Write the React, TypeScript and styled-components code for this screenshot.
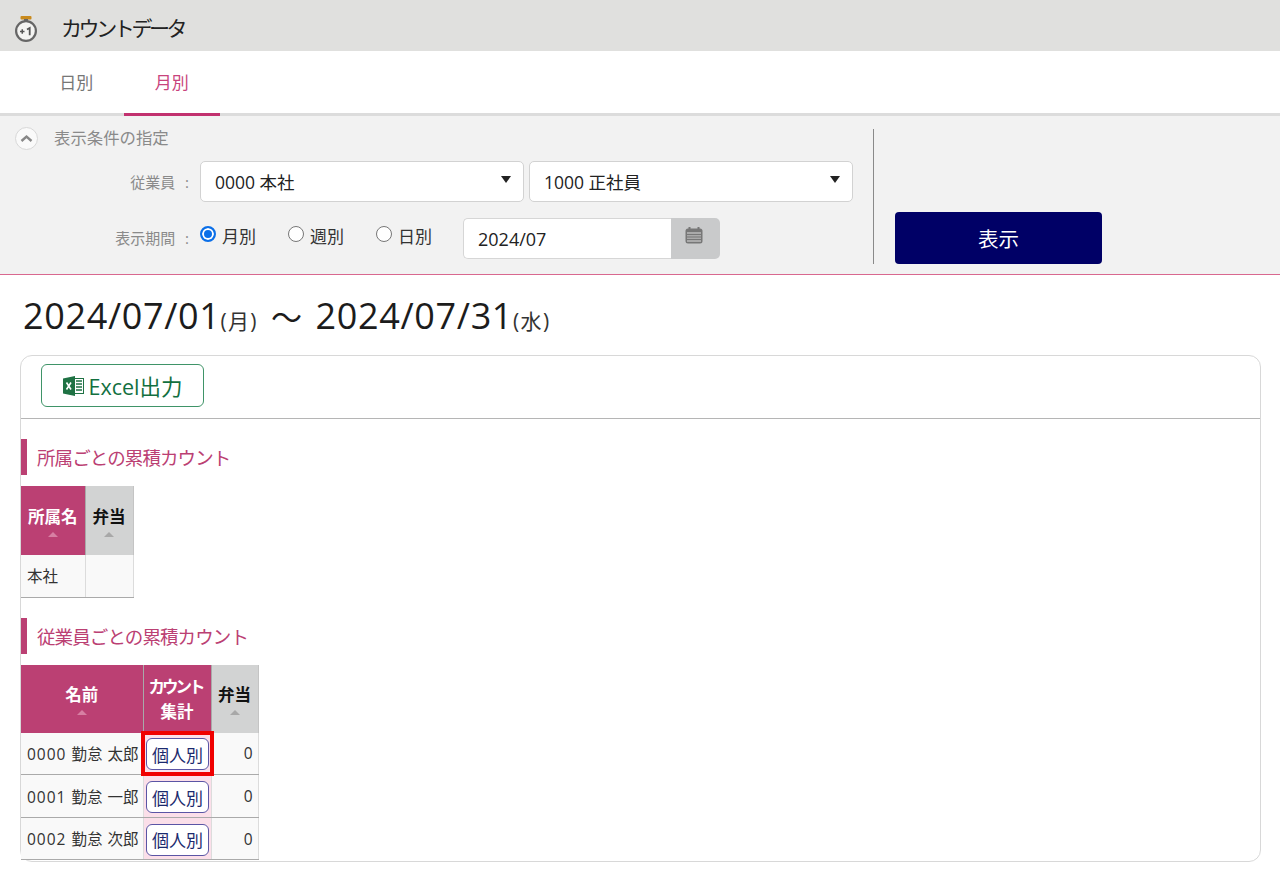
import React from "react";
import styled, { createGlobalStyle } from "styled-components";

const GlobalStyle = createGlobalStyle`
  html, body {
    margin: 0;
    padding: 0;
    background: #fff;
    font-family: "Open Sans", "Noto Sans CJK JP", sans-serif;
    color: #222;
  }
  * { box-sizing: border-box; }
`;

const AppBar = styled.header`
  height: 51px;
  background: #e0e0de;
  display: flex;
  align-items: center;
  padding-left: 14px;
  gap: 24px;
`;

const AppTitle = styled.h1`
  margin: 0 0 0 -1px;
  padding-top: 2px;
  font-size: 21px;
  font-weight: 400;
  letter-spacing: -3.4px;
  color: #222;
`;

const Tabs = styled.nav`
  height: 65px;
  display: flex;
  padding-left: 28.5px;
  border-bottom: 3px solid #dcdcdc;
`;

const Tab = styled.div<{ $active?: boolean }>`
  width: 95.5px;
  height: 65px;
  display: flex;
  align-items: center;
  justify-content: center;
  padding-bottom: 2px;
  font-size: 17px;
  color: ${(p) => (p.$active ? "#c8447c" : "#777")};
  border-bottom: 3px solid ${(p) => (p.$active ? "#c2316f" : "transparent")};
`;

const FilterPanel = styled.section`
  height: 159px;
  background: #f2f2f2;
  border-bottom: 1px solid #d9688f;
  display: flex;
  padding: 13px 0 10px;
`;

const FilterLeft = styled.div`
  width: 874px;
  border-right: 1px solid #8a8a8a;
  padding-left: 15px;
  display: flex;
  flex-direction: column;
`;

const FilterHead = styled.div`
  display: flex;
  align-items: center;
  gap: 16px;
  height: 20px;
  font-size: 16.4px;
  line-height: 20px;
  color: #8a8a8a;
`;

const HeadText = styled.span`
  margin-top: -3px;
`;

const CollapseButton = styled.span`
  width: 23px;
  height: 23px;
  border-radius: 50%;
  background: #fafafa;
  border: 1px solid #d8d8d8;
  display: flex;
  align-items: center;
  justify-content: center;
  margin-top: -2px;
`;

const FilterRow = styled.div<{ $top: number }>`
  display: flex;
  align-items: flex-start;
  margin-top: ${(p) => p.$top}px;
`;

const FieldLabel = styled.span<{ $top: number }>`
  width: 175px;
  text-align: right;
  font-size: 15px;
  word-spacing: 6px;
  padding-right: 1px;
  color: #8a8a8a;
  padding-top: ${(p) => p.$top}px;
  white-space: nowrap;
`;

const SelectBox = styled.div`
  width: 324px;
  height: 41px;
  margin-left: 10px;
  padding: 0 14px;
  background: #fff;
  border: 1px solid #d2d2d2;
  border-radius: 5px;
  display: flex;
  align-items: center;
  justify-content: space-between;
  font-size: 17.5px;
  color: #222;
  & + & { margin-left: 5px; }
`;

const Caret = styled.span`
  width: 0;
  height: 0;
  margin-right: -2px;
  border-left: 5px solid transparent;
  border-right: 5px solid transparent;
  border-top: 7px solid #222;
  margin-top: -4px;
`;

const RadioGroup = styled.div`
  display: flex;
  margin-left: 10px;
  padding-top: 5px;
`;

const RadioItem = styled.label<{ $width: number }>`
  width: ${(p) => p.$width}px;
  display: flex;
  align-items: center;
  gap: 6px;
  font-size: 17px;
  color: #333;
  height: 24px;
`;

const RadioDot = styled.span<{ $checked?: boolean }>`
  width: 16px;
  height: 16px;
  border-radius: 50%;
  flex: none;
  margin-top: -3px;
  background: ${(p) => (p.$checked ? "#0b6fe8" : "#fff")};
  border: ${(p) => (p.$checked ? "2px solid #0b6fe8" : "1.5px solid #777")};
  box-shadow: ${(p) => (p.$checked ? "inset 0 0 0 2px #fff" : "none")};
`;

const DateGroup = styled.div`
  display: flex;
  margin-left: 9px;
  height: 41px;
`;

const DateInput = styled.div`
  width: 208px;
  height: 41px;
  padding-left: 14px;
  background: #fff;
  border: 1px solid #d6d6d6;
  border-right: 0;
  border-radius: 5px 0 0 5px;
  display: flex;
  align-items: center;
  font-size: 18px;
  color: #222;
`;

const DateButton = styled.div`
  width: 49px;
  height: 41px;
  background: #c9cacb;
  border-radius: 0 5px 5px 0;
  display: flex;
  align-items: center;
  justify-content: center;
  padding: 0 3px 6px 0;
`;

const FilterRight = styled.div`
  flex: 1;
  padding: 83px 0 0 21px;
`;

const ShowButton = styled.button`
  width: 207px;
  height: 52px;
  border: 0;
  border-radius: 4px;
  background: #000066;
  color: #fff;
  font-family: inherit;
  font-size: 20.5px;
`;

const Period = styled.div`
  height: 80px;
  padding: 16px 0 0 23px;
  display: flex;
  align-items: baseline;
  font-size: 36px;
  letter-spacing: 0.65px;
  color: #1c1c1c;
  white-space: nowrap;
`;

const Weekday = styled.small`
  font-size: 21px;
  letter-spacing: 1.3px;
  color: #333;
`;

const Tilde = styled.span`
  margin: 0 13px 0 13px;
  font-size: 31px;
`;

const Card = styled.section`
  margin: 0 19px 0 20px;
  height: 507px;
  border: 1px solid #d8d8d8;
  border-radius: 12px;
`;

const CardToolbar = styled.div`
  height: 63px;
  padding: 8px 0 0 20px;
  border-bottom: 1px solid #b5b5b5;
`;

const ExcelButton = styled.button`
  width: 163px;
  height: 43px;
  background: #fff;
  border: 1px solid #3f9468;
  border-radius: 6px;
  display: flex;
  align-items: center;
  justify-content: center;
  gap: 5px;
  padding: 0;
  font-family: inherit;
  font-size: 21.5px;
  color: #12703f;
`;

const SectionTitle = styled.h2<{ $top: number }>`
  margin: ${(p) => p.$top}px 0 11px;
  height: 36px;
  padding-left: 10px;
  border-left: 6px solid #bb4073;
  display: flex;
  align-items: center;
  font-size: 18.5px;
  font-weight: 400;
  color: #bb4073;
  letter-spacing: -0.9px;
`;

const Table = styled.table`
  border-collapse: collapse;
  table-layout: fixed;
  font-size: 15.5px;
`;

const Th = styled.th<{ $accent?: boolean; $width: number; $height: number }>`
  width: ${(p) => p.$width}px;
  height: ${(p) => p.$height}px;
  padding: 0;
  text-align: center;
  vertical-align: middle;
  font-size: 16.5px;
  line-height: 25px;
  font-weight: 700;
  background: ${(p) => (p.$accent ? "#bb4073" : "#d2d3d3")};
  color: ${(p) => (p.$accent ? "#fff" : "#111")};
  border-right: 1px solid ${(p) => (p.$accent ? "#a9a9a9" : "#c4c4c4")};
`;

const NarrowHead = styled.span`
  letter-spacing: -3px;
  margin-right: 3px;
`;

const SortMark = styled.span<{ $accent?: boolean }>`
  display: block;
  width: 0;
  height: 0;
  margin: 3px auto 1px;
  border-left: 5px solid transparent;
  border-right: 5px solid transparent;
  border-bottom: 5px solid ${(p) => (p.$accent ? "#d77fa3" : "#a8a8a8")};
`;

const Td = styled.td<{ $tint?: boolean; $right?: boolean; $height: number }>`
  height: ${(p) => p.$height}px;
  padding: ${(p) => (p.$right ? "0 5px" : "0 0 0 6px")};
  text-align: ${(p) => (p.$right ? "right" : "left")};
  background: ${(p) => (p.$tint ? "#fbdfe9" : "#f9f9f9")};
  border-right: 1px solid #dcdcdc;
  border-bottom: 1px solid #aaa;
  color: #333;
  white-space: nowrap;
  word-spacing: 1px;
`;

const Code = styled.span`
  letter-spacing: 1px;
`;

const CountCell = styled(Td)`
  padding: 0;
  text-align: center;
`;

const PersonButton = styled.button<{ $marked?: boolean }>`
  position: relative;
  width: 63px;
  height: 32px;
  padding: 0 0 0 1px;
  background: #fff;
  border: 1px solid #5b55a5;
  border-radius: 6px;
  font-family: inherit;
  font-size: 17px;
  color: #1c2a6e;
  display: block;
  margin: 2px auto 0;
  ${(p) =>
    p.$marked &&
    `&::after {
      content: "";
      position: absolute;
      top: -8px;
      bottom: -7px;
      left: -6px;
      right: -6px;
      border: 4px solid #f00000;
    }`}
`;

const StopwatchMount = styled.span`
  display: flex;
  margin-top: 6px;
`;

const StopwatchIcon = () => (
  <StopwatchMount>
    <svg width="24" height="28" viewBox="0 0 24 28">
      <rect x="6.500" y="1" width="11" height="3.500" rx="1" fill="#c98a1c" />
      <rect x="10" y="4" width="4" height="3" fill="#666" />
      <circle cx="12" cy="16" r="9.900" fill="#f4f4f2" stroke="#666" strokeWidth="2.200" />
      <path d="M6 16.500h4.500M8.250 14.250v4.500" stroke="#555" strokeWidth="1.500" />
      <path d="M13 14.500l2.700-1.500v7.200" fill="none" stroke="#555" strokeWidth="1.800" />
    </svg>
  </StopwatchMount>
);

const ChevronUp = () => (
  <svg width="13" height="9" viewBox="0 0 13 9">
    <path d="M1.500 7l5-4.500 5 4.500" fill="none" stroke="#888" strokeWidth="2.400" />
  </svg>
);

const CalendarIcon = () => (
  <svg width="18" height="17" viewBox="0 0 18 17">
    <rect x="3.500" y="0" width="2" height="3" fill="#777" />
    <rect x="12.500" y="0" width="2" height="3" fill="#777" />
    <rect x="0.500" y="1.500" width="17" height="15" rx="2.500" fill="#777" />
    <rect x="2" y="5" width="14" height="10" fill="#aaa" />
    <path d="M2 7.500h14M2 10h14M2 12.500h14" stroke="#777" strokeWidth="1" />
  </svg>
);

const ExcelIcon = () => (
  <svg width="21" height="20" viewBox="0 0 21 20">
    <rect x="9" y="2.500" width="11.500" height="15" fill="#fff" stroke="#1f7244" />
    <path d="M13 5h6M13 8h6M13 11h6M13 14h6" stroke="#1f7244" strokeWidth="1.300" />
    <path d="M0 2.500L12 0v20L0 17.500z" fill="#1f7244" />
    <path d="M3.500 6.500l4.500 7M8 6.500l-4.500 7" stroke="#fff" strokeWidth="1.600" />
  </svg>
);

const employees = [
  { code: "0000", name: "勤怠 太郎", marked: true, height: 42 },
  { code: "0001", name: "勤怠 一郎", marked: false, height: 43 },
  { code: "0002", name: "勤怠 次郎", marked: false, height: 42 },
];

const App: React.FC = () => {
  return (
    <>
      <GlobalStyle />
      <AppBar>
        <StopwatchIcon />
        <AppTitle>カウントデータ</AppTitle>
      </AppBar>
      <Tabs>
        <Tab>日別</Tab>
        <Tab $active>月別</Tab>
      </Tabs>
      <FilterPanel>
        <FilterLeft>
          <FilterHead>
            <CollapseButton>
              <ChevronUp />
            </CollapseButton>
            <HeadText>表示条件の指定</HeadText>
          </FilterHead>
          <FilterRow $top={12}>
            <FieldLabel $top={10}>従業員 :</FieldLabel>
            <SelectBox>
              0000 本社
              <Caret />
            </SelectBox>
            <SelectBox>
              1000 正社員
              <Caret />
            </SelectBox>
          </FilterRow>
          <FilterRow $top={16}>
            <FieldLabel $top={9}>表示期間 :</FieldLabel>
            <RadioGroup>
              <RadioItem $width={88}>
                <RadioDot $checked />
                月別
              </RadioItem>
              <RadioItem $width={88}>
                <RadioDot />
                週別
              </RadioItem>
              <RadioItem $width={78}>
                <RadioDot />
                日別
              </RadioItem>
            </RadioGroup>
            <DateGroup>
              <DateInput>2024/07</DateInput>
              <DateButton>
                <CalendarIcon />
              </DateButton>
            </DateGroup>
          </FilterRow>
        </FilterLeft>
        <FilterRight>
          <ShowButton>表示</ShowButton>
        </FilterRight>
      </FilterPanel>
      <Period>
        2024/07/01<Weekday>(月)</Weekday>
        <Tilde>～</Tilde>
        2024/07/31<Weekday>(水)</Weekday>
      </Period>
      <Card>
        <CardToolbar>
          <ExcelButton>
            <ExcelIcon />
            Excel出力
          </ExcelButton>
        </CardToolbar>
        <SectionTitle $top={20}>所属ごとの累積カウント</SectionTitle>
        <Table>
          <thead>
            <tr>
              <Th $accent $width={64} $height={69}>
                所属名
                <SortMark $accent />
              </Th>
              <Th $width={48} $height={69}>
                弁当
                <SortMark />
              </Th>
            </tr>
          </thead>
          <tbody>
            <tr>
              <Td $height={42}>本社</Td>
              <Td $height={42} />
            </tr>
          </tbody>
        </Table>
        <SectionTitle $top={20}>従業員ごとの累積カウント</SectionTitle>
        <Table>
          <thead>
            <tr>
              <Th $accent $width={122} $height={68}>
                名前
                <SortMark $accent />
              </Th>
              <Th $accent $width={68} $height={68}>
                <NarrowHead>カウント</NarrowHead>
                <br />
                集計
              </Th>
              <Th $width={47} $height={68}>
                弁当
                <SortMark />
              </Th>
            </tr>
          </thead>
          <tbody>
            {employees.map((e) => (
              <tr key={e.code}>
                <Td $height={e.height}>
                  <Code>{e.code}</Code> {e.name}
                </Td>
                <CountCell $tint $height={e.height}>
                  <PersonButton $marked={e.marked}>個人別</PersonButton>
                </CountCell>
                <Td $right $height={e.height}>
                  0
                </Td>
              </tr>
            ))}
          </tbody>
        </Table>
      </Card>
    </>
  );
};

export default App;
